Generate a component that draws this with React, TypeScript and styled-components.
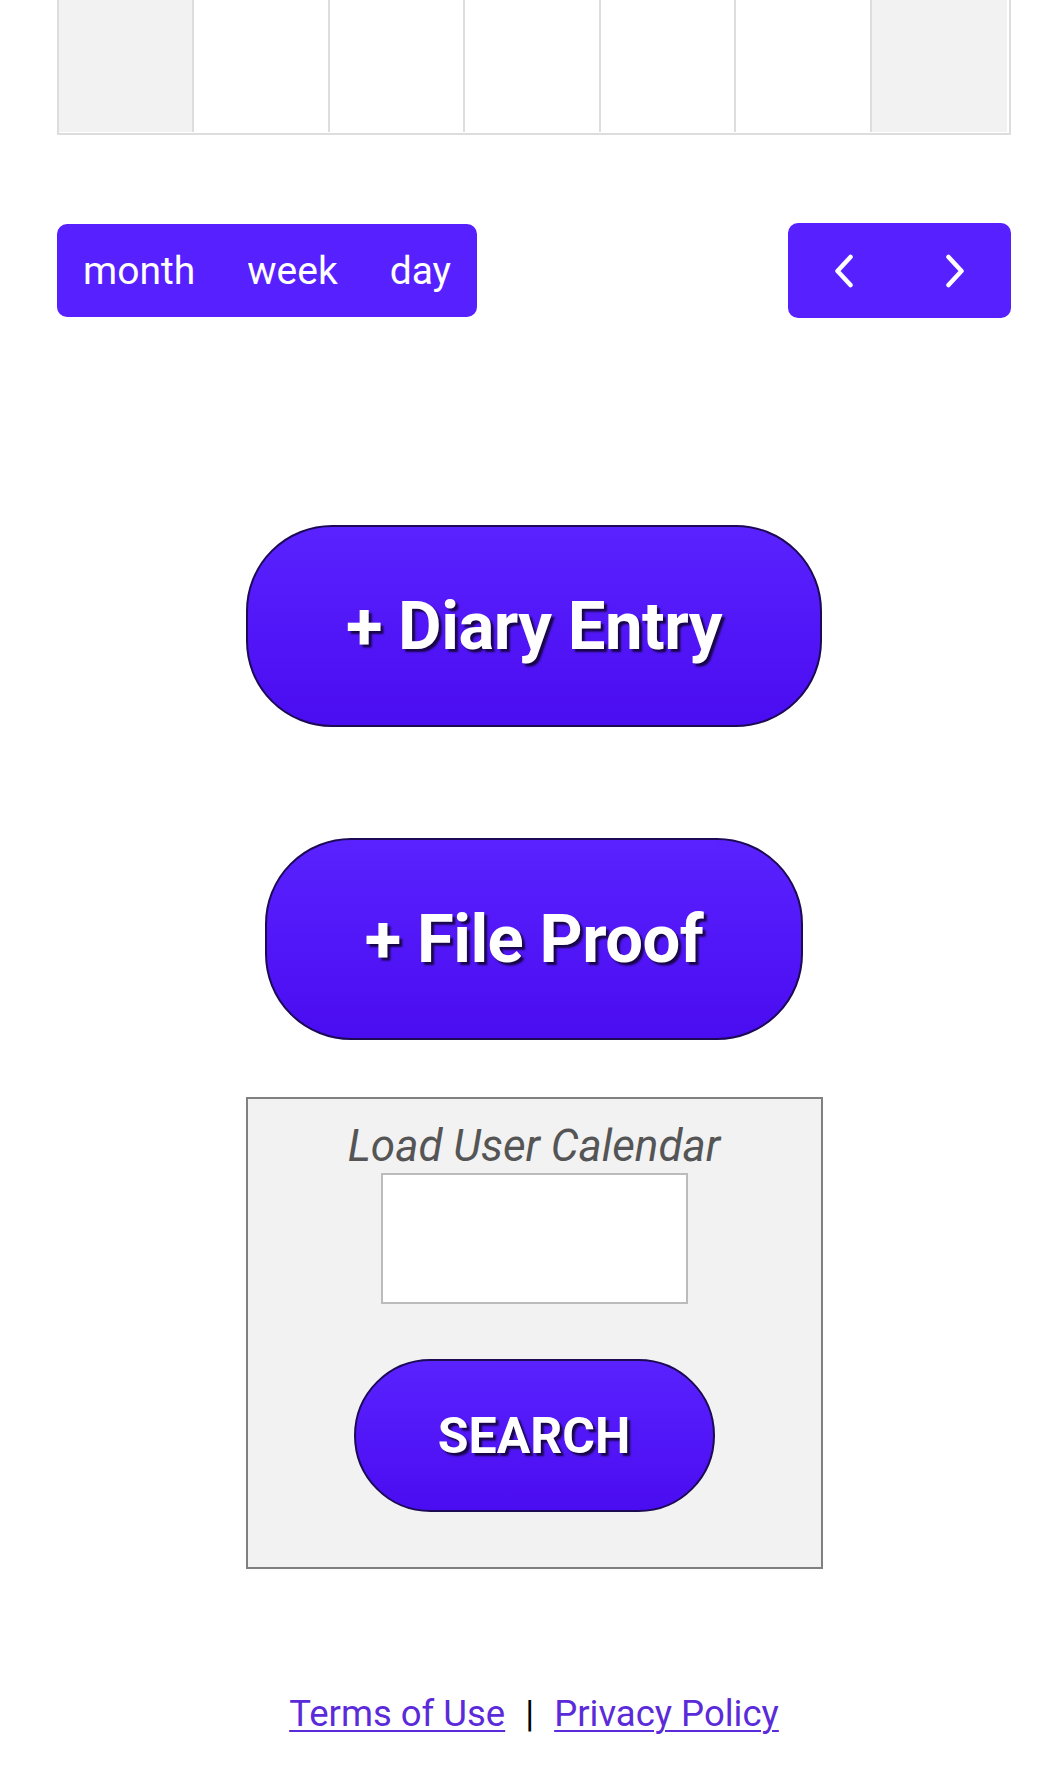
import styled, { createGlobalStyle } from 'styled-components';

const GlobalStyle = createGlobalStyle`
  * {
    box-sizing: border-box;
  }
  body {
    margin: 0;
    background: #ffffff;
    font-family: Roboto, 'Liberation Sans', Arial, sans-serif;
  }
`;

const PURPLE = '#5721ff';

const Page = styled.div`
  width: 954px;
  margin-left: 57px;
  display: flex;
  flex-direction: column;
  padding-bottom: 47px;
`;

const CalendarTail = styled.div`
  display: grid;
  grid-template-columns: repeat(7, 1fr);
  height: 135px;
  border: 2px solid #dddddd;
  border-top: none;
  padding: 0 2px 1px 0;
`;

const DayCell = styled.div<{ $weekend?: boolean; $last?: boolean }>`
  background: ${(p) => (p.$weekend ? '#f2f2f2' : '#ffffff')};
  border-right: ${(p) => (p.$last ? 'none' : '2px solid #dddddd')};
`;

const Toolbar = styled.div`
  margin-top: 88px;
  display: flex;
  justify-content: space-between;
  align-items: center;
`;

const ButtonGroup = styled.div<{ $height: number }>`
  display: flex;
  height: ${(p) => p.$height}px;
  background: ${PURPLE};
  border-radius: 10px;
  overflow: hidden;
`;

const ViewButton = styled.button`
  border: none;
  background: transparent;
  color: #ffffff;
  font-family: Roboto, 'Liberation Sans', Arial, sans-serif;
  font-size: 39px;
  padding: 0 26px;
  cursor: pointer;
`;

const NavButton = styled.button`
  width: 111.5px;
  border: none;
  background: transparent;
  display: flex;
  align-items: center;
  justify-content: center;
  cursor: pointer;
`;

const Actions = styled.div`
  display: flex;
  flex-direction: column;
  align-items: center;
`;

const BigButton = styled.button<{ $top: number }>`
  margin-top: ${(p) => p.$top}px;
  height: 202px;
  padding: 0 98px;
  border: 2px solid #1c0a55;
  border-radius: 86px;
  background: linear-gradient(to bottom, #5a22ff 0%, #4a0cf0 100%);
  color: #ffffff;
  font-family: Roboto, 'Liberation Sans', Arial, sans-serif;
  font-weight: 700;
  font-size: 67px;
  letter-spacing: -0.5px;
  text-shadow: 3px 3px 2px rgba(0, 0, 0, 0.7);
  cursor: pointer;
`;

const SearchBox = styled.div`
  margin-top: 57px;
  width: 577px;
  height: 472px;
  border: 2px solid #808080;
  background: #f2f2f2;
  display: flex;
  flex-direction: column;
  align-items: center;
  padding-top: 20px;
`;

const SearchLabel = styled.label`
  font-family: Roboto, 'Liberation Sans', Arial, sans-serif;
  font-style: italic;
  font-size: 44px;
  line-height: 54px;
  color: #555555;
`;

const UserInput = styled.input`
  margin-top: 0;
  width: 307px;
  height: 131px;
  border: 2px solid #bbbbbb;
  background: #ffffff;
  outline: none;
`;

const SearchButton = styled.button`
  margin-top: 55px;
  width: 361px;
  height: 153px;
  border: 2px solid #1c0a55;
  border-radius: 77px;
  background: linear-gradient(to bottom, #5a22ff 0%, #4a0cf0 100%);
  color: #ffffff;
  font-family: Roboto, 'Liberation Sans', Arial, sans-serif;
  font-weight: 700;
  font-size: 50px;
  text-shadow: 3px 3px 2px rgba(0, 0, 0, 0.7);
  cursor: pointer;
`;

const Footer = styled.div`
  margin-top: 123px;
  display: flex;
  justify-content: center;
  align-items: center;
  gap: 20px;
  font-family: Roboto, 'Liberation Sans', Arial, sans-serif;
  font-size: 36.5px;
  line-height: 44px;
`;

const FooterLink = styled.a`
  color: #5b2bd9;
  text-decoration: underline;
  text-underline-offset: 4px;
  text-decoration-thickness: 2px;
`;

const Separator = styled.span`
  color: #000000;
`;

const Chevron = ({ dir }: { dir: 'left' | 'right' }) => (
  <svg width="20" height="34" viewBox="0 0 20 34" fill="none">
    <path
      d={dir === 'left' ? 'M16.5 3 L3.5 17 L16.5 31' : 'M3.5 3 L16.5 17 L3.5 31'}
      stroke="#ffffff"
      strokeWidth="4.5"
      strokeLinecap="round"
      strokeLinejoin="round"
    />
  </svg>
);

const App = () => {
  const days = [0, 1, 2, 3, 4, 5, 6];
  return (
    <>
      <GlobalStyle />
      <Page>
        <CalendarTail>
          {days.map((d) => (
            <DayCell key={d} $weekend={d === 0 || d === 6} $last={d === 6} />
          ))}
        </CalendarTail>

        <Toolbar>
          <ButtonGroup $height={93}>
            <ViewButton>month</ViewButton>
            <ViewButton>week</ViewButton>
            <ViewButton>day</ViewButton>
          </ButtonGroup>
          <ButtonGroup $height={95}>
            <NavButton aria-label="prev">
              <Chevron dir="left" />
            </NavButton>
            <NavButton aria-label="next">
              <Chevron dir="right" />
            </NavButton>
          </ButtonGroup>
        </Toolbar>

        <Actions>
          <BigButton $top={207}>+ Diary Entry</BigButton>
          <BigButton $top={111}>+ File Proof</BigButton>

          <SearchBox>
            <SearchLabel>Load User Calendar</SearchLabel>
            <UserInput type="text" />
            <SearchButton>SEARCH</SearchButton>
          </SearchBox>
        </Actions>

        <Footer>
          <FooterLink href="#">Terms of Use</FooterLink>
          <Separator>|</Separator>
          <FooterLink href="#">Privacy Policy</FooterLink>
        </Footer>
      </Page>
    </>
  );
};

export default App;
